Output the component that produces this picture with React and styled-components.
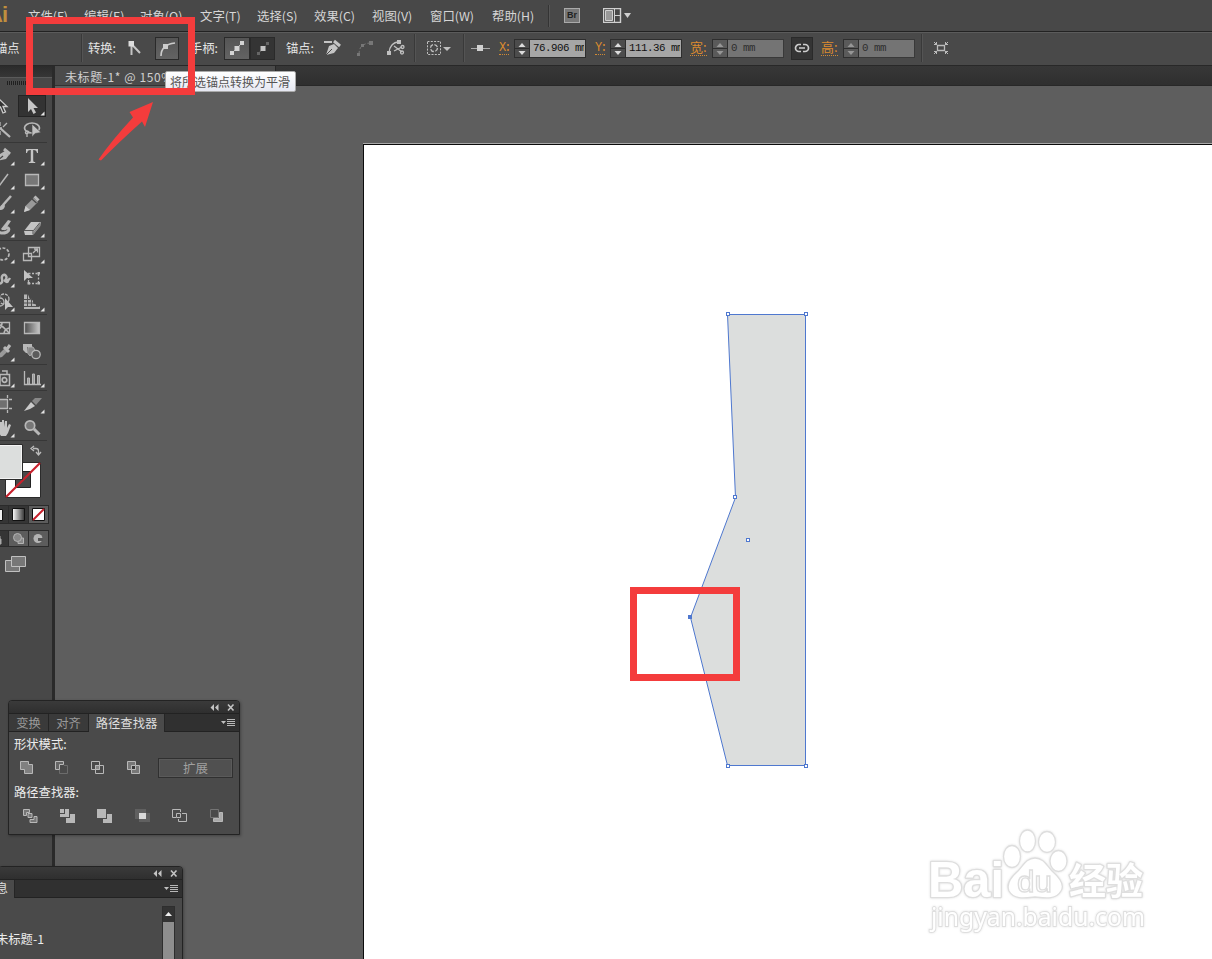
import React from "react";
import styled, { createGlobalStyle, css } from "styled-components";

const GlobalStyle = createGlobalStyle`
  * { box-sizing: border-box; }
  body {
    margin: 0;
    overflow: hidden;
    font-family: "Noto Sans CJK SC", sans-serif;
    font-size: 12px;
    color: #d6d6d6;
    background: #5e5e5e;
  }
  svg { display: block; flex: none; }
`;

const Window = styled.div`
  position: relative;
  display: flex;
  flex-direction: column;
  width: 1212px;
  height: 959px;
  overflow: hidden;
  background: #5e5e5e;
`;

/* menu bar */

const MenuBar = styled.nav`
  display: flex;
  align-items: center;
  flex: none;
  height: 32px;
  background: #484848;
  border-bottom: 1px solid #222;
`;

const Logo = styled.div`
  width: 28px;
  height: 30px;
  margin-left: -13px;
  margin-right: 13px;
  font: bold 22px/27px "Liberation Sans", sans-serif;
  color: #c08f3e;
  letter-spacing: -1px;
  white-space: nowrap;
`;

const MenuItem = styled.span`
  width: ${(p) => p.$w}px;
  flex: none;
  line-height: 18px;
  font-size: 12.4px;
  white-space: nowrap;
`;

const MenuDivider = styled.i`
  width: 2px;
  height: 22px;
  margin-right: 14px;
  background: #343434;
  border-right: 1px solid #565656;
`;

const BridgeButton = styled.div`
  width: 16px;
  height: 15px;
  margin-right: 23px;
  border: 1px solid #aaa;
  background: #777;
  color: #222;
  font: bold 9px/13px "Liberation Sans", sans-serif;
  text-align: center;
`;

/* control bar */

const ControlBar = styled.div`
  display: flex;
  align-items: center;
  flex: none;
  height: 34px;
  padding-bottom: 2px;
  background: #494949;
  border-top: 1px solid #5b5b5b;
  border-bottom: 1px solid #282828;
  overflow: hidden;
`;

const Slot = styled.div`
  display: flex;
  align-items: center;
  flex: none;
  width: ${(p) => p.$w}px;
  height: 30px;
  color: #e2e2e2;
  font-size: 12.3px;
  white-space: nowrap;
`;

const SelectionSlot = styled(Slot)`
  margin-left: -5px;
`;

const Divider = styled.i`
  flex: none;
  width: 2px;
  height: 28px;
  background: #393939;
  border-right: 1px solid #545454;
`;

const Toggle = styled.div`
  display: flex;
  align-items: center;
  justify-content: center;
  flex: none;
  width: ${(p) => p.$w || 24}px;
  height: 23px;
  border: 1px solid #2a2a2a;
  background: ${(p) => (p.$dark ? "#343434" : "linear-gradient(#555, #636363)")};
`;

const OrangeLabel = styled.span`
  display: inline-block;
  height: ${(p) => (p.$mono ? 14 : 15)}px;
  border-bottom: 1px dotted #d08a35;
  color: #db8b2f;
  font-family: ${(p) => (p.$mono ? '"Liberation Mono"' : '"Noto Sans CJK SC"')}, monospace;
  font-size: ${(p) => (p.$mono ? 12 : 13)}px;
  line-height: ${(p) => (p.$mono ? 14 : 12)}px;
  letter-spacing: ${(p) => (p.$mono ? -2 : 0)}px;
`;

const Steps = styled.div`
  display: flex;
  flex: none;
  width: 16px;
  height: 19px;
  border: 1px solid #2e2e2e;
  background: ${(p) => (p.$off ? "#5a5a5a" : "#4c4c4c")};
`;

const ValueBox = styled.div`
  flex: none;
  width: 56px;
  height: 19px;
  padding: 0 1px 0 3px;
  border: 1px solid #2e2e2e;
  border-left: 0;
  background: #a6a6a6;
  color: #111;
  font: 10.8px/16px "Liberation Mono", monospace;
  letter-spacing: -0.48px;
  ${(p) =>
    p.$off &&
    css`
      background: #747474;
      color: #2e2e2e;
      border-color: #393939;
    `}
`;

const ValueText = styled.span`
  display: block;
  overflow: hidden;
  white-space: nowrap;
`;

/* work area */

const Workspace = styled.div`
  display: flex;
  flex: 1;
  min-height: 0;
`;

const Tools = styled.aside`
  flex: none;
  width: 55px;
  background: #484848;
  border-right: 3px solid #2a2a2a;
  overflow: hidden;
`;

const ToolsHeader = styled.div`
  height: 12px;
  background: linear-gradient(#2b2b2b, #363636);
  border-bottom: 1px solid #5a5a5a;
`;

const Grip = styled.div`
  width: 20px;
  height: 4px;
  margin: 3px 0 9px 7px;
  background: repeating-linear-gradient(90deg, #1f1f1f 0 1px, #4a4a4a 1px 2px);
`;

const ToolGroup = styled.div`
  display: grid;
  grid-template-columns: 28px 28px;
  width: 57px;
  margin-left: -10px;
  border-bottom: 1px solid #373737;
  margin-bottom: 1px;
`;

const ToolCell = styled.div`
  height: 24px;
  ${(p) =>
    p.$active &&
    css`
      background: #333;
      box-shadow: inset 0 0 0 1px #242424;
      height: 22px;
      margin-top: 1px;
      & > svg { margin-top: -1px; }
    `}
`;

const ModeRow = styled.div`
  display: grid;
  grid-template-columns: 19px 20px 20px;
  width: 59px;
  height: ${(p) => p.$h}px;
  margin: ${(p) => p.$top}px 0 0 -10px;
  border: solid #2b2b2b;
  border-width: 1px 1px 1px 0;
`;

const ModeCell = styled.div`
  display: flex;
  align-items: center;
  justify-content: center;
  border-right: 1px solid #2b2b2b;
  background: ${(p) => (p.$dark ? "#353535" : "#5c5c5c")};
`;

const Document = styled.main`
  display: flex;
  flex-direction: column;
  flex: 1;
  min-width: 0;
`;

const TabStrip = styled.div`
  height: 20px;
  flex: none;
  background: linear-gradient(#373737, #2f2f2f);
  border-bottom: 1px solid #282828;
`;

const DocTab = styled.div`
  width: 221px;
  height: 20px;
  padding-left: 10px;
  background: #4b4b4b;
  border-right: 1px solid #272727;
  border-bottom: 1px solid #333;
  color: #d0d0d0;
  font-size: 12px;
  line-height: 21px;
  letter-spacing: 0.6px;
  white-space: nowrap;
`;

const Canvas = styled.div`
  flex: 1;
  padding: 58px 0 0 308px;
  background: #5e5e5e;
`;

const Artboard = styled.div`
  width: 849px;
  height: 815px;
  border: solid #0c0c0c;
  border-width: 1px 0 0 1px;
  background: #fff;
  box-shadow: 0 -1px 0 #a8a8a8;
`;

/* floating panels */

const Panel = styled.section`
  position: absolute;
  left: ${(p) => p.$x}px;
  top: ${(p) => p.$y}px;
  width: ${(p) => p.$w}px;
  height: ${(p) => p.$h}px;
  background: #4a4a4a;
  border: 1px solid #232323;
  border-radius: 4px 4px 0 0;
  box-shadow: 1px 1px 3px rgba(0, 0, 0, 0.3);
  overflow: hidden;
`;

const PanelTop = styled.header`
  display: flex;
  align-items: center;
  justify-content: flex-end;
  height: 13px;
  padding-right: 4px;
  background: linear-gradient(#3a3a3a, #2f2f2f);
  border-bottom: 1px solid #222;
`;

const PanelTabs = styled.div`
  display: flex;
  height: 18px;
  background: #303030;
  border-bottom: 1px solid #222;
`;

const PanelTab = styled.div`
  width: ${(p) => p.$w}px;
  height: ${(p) => (p.$on ? 18 : 17)}px;
  flex: none;
  border-right: 1px solid #252525;
  background: ${(p) => (p.$on ? "#4a4a4a" : "#3a3a3a")};
  color: ${(p) => (p.$on ? "#ddd" : "#999")};
  font-size: 12.3px;
  line-height: 19px;
  text-align: center;
  white-space: nowrap;
`;

const InfoTab = styled(PanelTab)`
  line-height: 17px;
  padding-right: 6px;
  text-align: right;
  direction: rtl;
  overflow: hidden;
`;

const PanelMenu = styled.div`
  margin: 4px 3px 0 auto;
`;

const Heading = styled.div`
  height: 24px;
  padding-left: 5px;
  color: #ececec;
  line-height: 25px;
  font-size: 12.3px;
`;

const IconRow = styled.div`
  display: flex;
  align-items: center;
  height: 24px;
  padding-left: ${(p) => p.$pad}px;
  gap: ${(p) => p.$gap}px;
  & > svg { margin-top: -1px; }
`;

const ExpandButton = styled.div`
  width: 75px;
  height: 20px;
  margin-left: -5px;
  border: 1px solid #303030;
  background: #505050;
  box-shadow: inset 0 0 0 1px #5a5a5a;
  color: #a0a0a0;
  font-size: 12.5px;
  line-height: 18px;
  text-align: center;
`;

const InfoBody = styled.div`
  display: flex;
  justify-content: space-between;
  height: 61px;
  padding: 8px 7px 0 0;
  color: #ececec;
`;

const InfoText = styled.div`
  margin: 24px 0 0 -3px;
  line-height: 18px;
  font-size: 12.3px;
  white-space: nowrap;
`;

const ScrollBar = styled.div`
  width: 13px;
  height: 60px;
  background: #8e8e8e;
  border: 1px solid #2e2e2e;
`;

const ScrollUp = styled.div`
  height: 15px;
  background: #333;
`;

/* annotations lying over the window */

const Tooltip = styled.div`
  position: absolute;
  left: 165px;
  top: 71px;
  width: 131px;
  height: 21px;
  padding-left: 4px;
  border: 1px solid #aaa;
  border-radius: 2px;
  background: linear-gradient(#fff, #e6e8f2);
  color: #555;
  font-size: 12px;
  line-height: 19px;
  white-space: nowrap;
`;

const RedFrame = styled.div`
  position: absolute;
  left: ${(p) => p.$x}px;
  top: ${(p) => p.$y}px;
  width: ${(p) => p.$w}px;
  height: ${(p) => p.$h}px;
  border: 7px solid #f43c3c;
`;

const Arrow = styled.svg`
  position: absolute;
  left: 90px;
  top: 94px;
`;

const Watermark = styled.svg`
  position: absolute;
  left: 915px;
  top: 820px;
  filter: drop-shadow(0 0 1px rgba(0, 0, 0, 0.12));
`;

const tone = "#b8b8b8";

const Corner = ({ x }) => <path d={`M${x} 17.500v4h-4z`} fill="#e4e4e4" />;

function Tool({ right, active, corner = true, children }) {
  return (
    <ToolCell $active={active}>
      <svg width="28" height="24" viewBox={right ? "18 0 28 24" : "-10 0 28 24"} fill="none" stroke={tone} strokeWidth="1.3">
        {children}
        {corner && <g stroke="none"><Corner x={right ? 44.5 : 14.5} /></g>}
      </svg>
    </ToolCell>
  );
}

function ToolGrid() {
  return (
    <>
      <ToolGroup>
        <Tool corner={false}>
          <path d="M-3 3v13l3.500-3 2.500 6 2.500-1-2.500-5.500H7z" fill="#333" stroke="#ccc" />
        </Tool>
        <Tool right active>
          <path d="M28 4v14l3-3 2.500 5 2.500-1.500-2.500-4.500H38z" fill="#c6c6c6" stroke="none" />
        </Tool>
        <Tool corner={false}>
          <path d="M0 10l10 9" strokeWidth="2.200" />
          <path d="M0 4v4M3 9l4-4M-2 10h4M0 13v4" />
        </Tool>
        <Tool right corner={false}>
          <ellipse cx="32" cy="10" rx="7.500" ry="5" strokeWidth="1.700" />
          <path d="M27 13c-3 1-1 4 1 2s-1-2-1-2zM27 16v3" strokeWidth="1.300" />
          <path d="M32 6v13l3-3.500 6-1z" fill="#c0c0c0" stroke="#484848" strokeWidth=".6" />
        </Tool>
      </ToolGroup>
      <ToolGroup>
        <Tool>
          <path d="M-3 17l3-7 5-3 4 4-3 4z" fill={tone} stroke="none" />
          <path d="M4 5l6 5" strokeWidth="3" />
          <path d="M-3 17l6-5" stroke="#444" />
        </Tool>
        <Tool right>
          <path d="M26 5h12v4h-1c-.5-2-1-3-3.800-3v10c0 1.700.5 2 2 2v1h-6.400v-1c1.500 0 2-.3 2-2V6C28 6 27.500 7 27 9h-1z" fill="#c4c4c4" stroke="none" />
        </Tool>
        <Tool><path d="M-1 18L8 6" strokeWidth="1.500" /></Tool>
        <Tool right><path d="M25.500 6.500h13v11h-13z" fill="#777" /></Tool>
        <Tool>
          <path d="M11 4L3 13" strokeWidth="2.500" />
          <path d="M4 12c-2-1-4 4-7 5 4 2 7 1 8-3z" fill={tone} stroke="none" />
        </Tool>
        <Tool right>
          <path d="M24 20l1.500-6 8-8 4.500 4-8 8z" fill="#999" stroke="none" />
          <path d="M24 20l1.500-6 4.500 4z" fill="#ccc" stroke="none" />
          <path d="M32 7l4.500 4" stroke="#484848" />
          <path d="M34.500 4.500l4 4" strokeWidth="3" />
        </Tool>
        <Tool>
          <path d="M-1 9c-6 5 1 10 8 7 3-2 2-5-1-4s-3 2-3 2" strokeWidth="3" />
          <path d="M1 13L8 4l3 1-6 9z" fill={tone} stroke="none" />
        </Tool>
        <Tool right>
          <path d="M24 15l7-9h10l-1 4-7 9h-8z" fill="#c4c4c4" stroke="none" />
          <path d="M34 15l6.500-8.500V10l-7 8.500z" fill="#888" stroke="none" />
          <path d="M24 14.500h9.500L40 6.500M33 14.500v4" stroke="#555" strokeWidth="1" />
        </Tool>
      </ToolGroup>
      <ToolGroup>
        <Tool><circle cx="3" cy="12" r="6" strokeDasharray="3 1.500" strokeWidth="1.700" /></Tool>
        <Tool right>
          <path d="M28.500 5.500h11v9h-11zM23.500 11.500h8v7h-8z" />
          <path d="M33 11l4-4M34 7h3.500v3.500" />
        </Tool>
        <Tool>
          <path d="M-3 17c4 2 6-1 5-4s2-6 4-3-2 4-1 5 4-1 5-3" strokeWidth="2.400" />
          <circle cx="7" cy="15" r="1.500" />
        </Tool>
        <Tool right corner={false}>
          <path d="M28.500 7.500h10v10h-10z" strokeDasharray="2 1.500" />
          <path d="M24 4v11l3-3h6z" fill="#c4c4c4" stroke="none" />
          <path d="M37.500 6h2.500v2.500h-2.500zM37.500 16h2.500v2.500h-2.500zM27.500 16h2.500v2.500h-2.500z" fill={tone} stroke="none" />
        </Tool>
        <Tool>
          <circle cx="4" cy="9" r="5" strokeDasharray="3 1" /><circle cx="0" cy="12" r="4" />
          <path d="M5 8v12l3-3h5z" fill="#c4c4c4" stroke="none" />
        </Tool>
        <Tool right>
          <path d="M24 4.500h4l2 5 3 1v3l3 1v2h4v2.500H24z" fill="#b4b4b4" stroke="none" />
          <path d="M27.500 4v12M31.500 8v8M24 9.500h6M24 13h10M24 16.500h15" stroke="#505050" strokeWidth="1" />
        </Tool>
      </ToolGroup>
      <ToolGroup>
        <Tool corner={false}>
          <path d="M-4 6.500H9.500v11H-4z" />
          <path d="M-4 15C2 12 2 9 2 6M4 18c0-5 3-5 5-6M-3 8c6 1 8 5 12 9" strokeWidth="1.600" />
        </Tool>
        <Tool right corner={false}>
          <defs>
            <linearGradient id="toolGradient"><stop stopColor="#4c4c4c" /><stop offset="1" stopColor="#c8c8c8" /></linearGradient>
          </defs>
          <path d="M24.500 6.500h15v11h-15z" fill="url(#toolGradient)" />
        </Tool>
        <Tool>
          <path d="M-3 18l2-4 6-6 3 3-6 6z" fill="#999" stroke="none" />
          <path d="M4 7l5 5M7 9l3-4" strokeWidth="3" />
        </Tool>
        <Tool right corner={false}>
          <path d="M23 4h9v3h-5v6h-1l-3-3z" fill={tone} stroke="none" />
          <path d="M28 7h5l2 3-5 6-2.500-3z" fill="#888" stroke={tone} strokeWidth=".8" />
          <circle cx="36" cy="14.500" r="4.200" fill="#5b5b5b" />
        </Tool>
      </ToolGroup>
      <ToolGroup>
        <Tool>
          <path d="M0 8.500h9.500v11H0zM2 5h5v3" strokeWidth="1.500" /><circle cx="4.500" cy="14" r="2.300" strokeWidth="1.700" />
          <path d="M-4 5h4M-4 9h2" strokeDasharray="1 1" />
        </Tool>
        <Tool right>
          <path d="M24.500 5v13.500H41" />
          <path d="M27.500 12h2v6h-2zM32.500 8h2v10h-2zM37.500 9.500h2V18h-2z" fill="#999" strokeWidth="1" />
        </Tool>
      </ToolGroup>
      <ToolGroup>
        <Tool corner={false}>
          <path d="M-4 7.500H7.500v9H-4z" fill="#707070" />
          <path d="M7.500 3v3M7.500 18v3M9 7.500h3M9 16.500h3" />
        </Tool>
        <Tool right>
          <path d="M24 19l7-9 4 4-5 3z" fill="#cacaca" stroke="none" />
          <path d="M32 9l3-3h7l-6 7z" fill="#888" stroke="none" />
        </Tool>
        <Tool>
          <path d="M-1 17l-4-6 2-1 3 3V6h2v5V4h2v7l1-6h2v7l2-4 2 1-3 8-2 3H1z" fill="#c6c6c6" stroke="none" />
        </Tool>
        <Tool right corner={false}>
          <circle cx="30" cy="9.500" r="4.700" fill="#777" strokeWidth="1.700" />
          <path d="M34 13l5.500 5.500" strokeWidth="3" />
        </Tool>
      </ToolGroup>
    </>
  );
}

function Swatches() {
  return (
    <svg width="52" height="61" viewBox="0 442 52 61">
      <path d="M33 448.500h3q2.500 0 2.500 2.500v3M34 446l-3 2.500 3 2.500M36 452l2.500 3 2.500-3" fill="none" stroke="#bbb" strokeWidth="1.300" />
      <path d="M5.500 462.500h35v35h-35z" fill="#fff" stroke="#2b2b2b" />
      <path d="M15.500 471.500h15v16h-15z" fill="#484848" stroke="#222" />
      <path d="M6 497L40 463" stroke="#c8202c" strokeWidth="2.200" />
      <path d="M-2 444.500h24.500v35H-2z" fill="#dcdedd" stroke="#2b2b2b" />
      <path d="M-2 445.500h23.500v33H-2" fill="none" stroke="#f4f4f4" />
    </svg>
  );
}

function Stepper({ off }) {
  return (
    <Steps $off={off}>
      <svg width="14" height="17">
        <path d="M3.500 7l3.500-4 3.500 4zM3.500 11l3.500 4 3.500-4z" fill={off ? "#969696" : "#dcdcdc"} />
        <path d="M0 8.500h14" stroke="#2e2e2e" />
      </svg>
    </Steps>
  );
}

const Value = ({ off, children }) => (
  <ValueBox $off={off}><ValueText>{children}</ValueText></ValueBox>
);

function PanelControls() {
  return (
    <svg width="25" height="9" fill="#c4c4c4">
      <path d="M4 1v7L0.500 4.500zM8.500 1v7L5 4.500z" />
      <path d="M18 1.500l5.500 6M23.500 1.500l-5.500 6" stroke="#c4c4c4" strokeWidth="1.600" />
    </svg>
  );
}

function FlyoutIcon() {
  return (
    <svg width="15" height="10">
      <path d="M0 3h5L2.500 6z" fill="#c0c0c0" />
      <path d="M6 1.500h8M6 3.500h8M6 5.500h8M6 7.500h8" stroke="#b8b8b8" />
    </svg>
  );
}

const Glyph = ({ children }) => (
  <svg width="15" height="15" viewBox="0 0 15 15" fill="none" stroke="#b8b8b8">{children}</svg>
);

function PathfinderPanel() {
  return (
    <Panel $x={8} $y={700} $w={232} $h={135}>
      <PanelTop><PanelControls /></PanelTop>
      <PanelTabs>
        <PanelTab $w={40}>变换</PanelTab>
        <PanelTab $w={40}>对齐</PanelTab>
        <PanelTab $w={76} $on>路径查找器</PanelTab>
        <PanelMenu><FlyoutIcon /></PanelMenu>
      </PanelTabs>
      <Heading>形状模式:</Heading>
      <IconRow $pad={10} $gap={21}>
        <Glyph><path d="M1.500 1.500h8v3h4v9h-8v-4h-4z" fill="#808080" /></Glyph>
        <Glyph><path d="M.500 1.500h8v3h-4v5h-4z" fill="#666" /><path d="M9 5.500h3.500v8h-8V10" stroke="#6c6c6c" /></Glyph>
        <Glyph><path d="M.500 1.500h8v8h-8zM4.500 5.500h8v8h-8z" /><path d="M4.500 5.500h4v4h-4z" fill="#888" /></Glyph>
        <Glyph><path d="M.500 1.500h8v8h-8zM4.500 5.500h8v8h-8z" fill="#777" /><path d="M4.500 5.500h4v4h-4z" fill="#383838" /></Glyph>
        <ExpandButton>扩展</ExpandButton>
      </IconRow>
      <Heading>路径查找器:</Heading>
      <IconRow $pad={14} $gap={22.2}>
        <Glyph><path d="M.500 1.500h6v3h-3v3h-3zM5 5.500h4v4H5zM11 8.500h3v6H7v-3h4z" fill="#777" /></Glyph>
        <Glyph><path d="M0 1h4v4H0zM5 1h4v8H0V6h5zM10 6h5v9H6v-5h4z" fill={tone} stroke="none" /></Glyph>
        <Glyph><path d="M0 1h9v9H0zM10 6h5v9H6v-4h4z" fill={tone} stroke="none" /></Glyph>
        <Glyph><path d="M0 1h11v10H0zM4 5h11v9H4z" fill="#606060" stroke="none" /><path d="M4 5h7v6H4z" fill="#d8d8d8" stroke="none" /></Glyph>
        <Glyph><path d="M4 9.500H.500v-8h8V4M4.500 5.500h4v4h-4zM10 5.500h4.500v8h-8V11" /></Glyph>
        <Glyph><path d="M1.500 1.500h8v8h-8z" stroke="#747474" /><path d="M10.500 4.500h3v9h-9v-3h6z" fill="#aaa" /></Glyph>
      </IconRow>
    </Panel>
  );
}

function InfoPanel() {
  return (
    <Panel $x={-2} $y={866} $w={185} $h={95}>
      <PanelTop><PanelControls /></PanelTop>
      <PanelTabs>
        <InfoTab $w={16} $on>息</InfoTab>
        <PanelMenu><FlyoutIcon /></PanelMenu>
      </PanelTabs>
      <InfoBody>
        <InfoText>未标题-1</InfoText>
        <ScrollBar>
          <ScrollUp><svg width="11" height="15"><path d="M2 9l3.500-4L9 9z" fill="#eee" /></svg></ScrollUp>
        </ScrollBar>
      </InfoBody>
    </Panel>
  );
}

const menus = [
  ["文件(F)", 56], ["编辑(E)", 56], ["对象(O)", 60], ["文字(T)", 57], ["选择(S)", 57],
  ["效果(C)", 58], ["视图(V)", 58], ["窗口(W)", 62], ["帮助(H)", 56],
];

const anchors = [[728, 314], [806, 314], [806, 766], [728, 766], [735, 497], [748, 540]];

function Drawing() {
  return (
    <svg width="848" height="814" viewBox="364 145 848 814">
      <path d="M727.500 314.500H805.500V765.500H727.500L690.500 617.500L735.500 497.500Z" fill="#dcdedd" stroke="#4f78cf" />
      {anchors.map(([x, y]) => (
        <rect key={`${x}-${y}`} x={x - 1.5} y={y - 1.5} width="3" height="3" fill="#fff" stroke="#4f78cf" />
      ))}
      <rect x="688" y="615" width="4" height="4" fill="#4f78cf" />
    </svg>
  );
}

export default function App() {
  return (
    <Window>
      <GlobalStyle />
      <MenuBar>
        <Logo>Ai</Logo>
        {menus.map(([label, w]) => <MenuItem key={label} $w={w}>{label}</MenuItem>)}
        <MenuDivider />
        <BridgeButton>Br</BridgeButton>
        <svg width="28" height="15" fill="none" stroke="#d0d0d0">
          <path d="M.500.500h17v14H.500z" strokeWidth="1.400" />
          <path d="M2.500 2.500h7v10h-7z" fill="#999" />
          <path d="M11.500 1v13M11.500 7.500h6" />
          <path d="M21 5h7l-3.500 5z" fill="#d0d0d0" stroke="none" />
        </svg>
      </MenuBar>

      <ControlBar>
        <SelectionSlot $w={86}>锚点</SelectionSlot>
        <Divider />
        <Slot $w={5} />
        <Slot $w={39}>转换:</Slot>
        <Slot $w={28}>
          <svg width="16" height="16" stroke="#c4c4c4" fill="none" strokeWidth="2">
            <path d="M4.500 15V4l8.500 9" /><path d="M1.500 1h5.500v5.500H1.500z" fill="#ddd" stroke="none" />
          </svg>
        </Slot>
        <Slot $w={35}>
          <Toggle>
            <svg width="18" height="18" stroke="#ccc" fill="none" strokeWidth="1.600">
              <path d="M3 17c0-8 5-12 14-13" /><path d="M5 5h5v5H5z" fill="#ccc" stroke="none" />
            </svg>
          </Toggle>
        </Slot>
        <Slot $w={34}>手柄:</Slot>
        <Slot $w={62}>
          <Toggle $w={26}>
            <svg width="18" height="18" stroke="#bbb" fill="#d4d4d4"><path d="M4 14L14 4" /><path d="M2 12h4v4H2zM6.500 7h5v5h-5zM12 2h4v4h-4z" stroke="none" /></svg>
          </Toggle>
          <Toggle $w={25} $dark>
            <svg width="18" height="18" stroke="#777" fill="#c4c4c4"><path d="M4 15L14 4" strokeDasharray="2 1" /><path d="M6.500 7h5v5h-5z" stroke="none" /><path d="M3 13h3v3H3zM12 3h3v3h-3z" fill="#666" stroke="none" /></svg>
          </Toggle>
        </Slot>
        <Slot $w={38}>锚点:</Slot>
        <Slot $w={33}>
          <svg width="18" height="18" fill="#c4c4c4">
            <path d="M0 2h8v2H0z" />
            <path d="M2 16l3-9 5-2 4 4-4 5z" />
            <path d="M10 2l6 5" stroke="#c4c4c4" strokeWidth="3" />
            <path d="M2 16l6-6" stroke="#484848" />
          </svg>
        </Slot>
        <Slot $w={30}>
          <svg width="17" height="17" fill="#777" stroke="#777"><path d="M2 14C2 7 6 3 14 3" fill="none" strokeDasharray="3 2" /><path d="M12 1h4v4h-4zM0 13h3v3H0zM4 4h3v3H4z" stroke="none" /></svg>
        </Slot>
        <Slot $w={27}>
          <svg width="19" height="18" fill="none" stroke="#c0c0c0" strokeWidth="1.300">
            <path d="M2 14C2 8 6 3 12 3M7 7l8 6M7 12l8-4" /><path d="M10 1h4v4h-4zM0 12h4v4H0z" fill="#c0c0c0" stroke="none" /><circle cx="15.500" cy="8" r="1.500" /><circle cx="15" cy="13.500" r="1.500" />
          </svg>
        </Slot>
        <Divider />
        <Slot $w={47}>
          <svg width="36" height="16" viewBox="-10 0 36 16" fill="none" stroke="#c0c0c0">
            <path d="M1.500 1.500h13v13H1.500z" strokeDasharray="2 1.300" /><circle cx="8" cy="8" r="3.500" strokeWidth="1.300" strokeDasharray="4 1.500" />
            <path d="M17 7h8l-4 4z" fill="#c0c0c0" stroke="none" />
          </svg>
        </Slot>
        <Divider />
        <Slot $w={34}>
          <svg width="25" height="12" viewBox="-6 0 25 12"><path d="M0 6.500h19" stroke="#aaa" /><path d="M6 3h6v6H6z" fill="#d0d0d0" /></svg>
        </Slot>
        <Slot $w={15}><OrangeLabel $mono>X:</OrangeLabel></Slot>
        <Slot $w={81}><Stepper /><Value>76.906 mm</Value></Slot>
        <Slot $w={15}><OrangeLabel $mono>Y:</OrangeLabel></Slot>
        <Slot $w={80}><Stepper /><Value>111.36 mm</Value></Slot>
        <Slot $w={22}><OrangeLabel>宽:</OrangeLabel></Slot>
        <Slot $w={79}><Stepper off /><Value off>0 mm</Value></Slot>
        <Slot $w={30}>
          <Toggle $w={22} $dark>
            <svg width="16" height="10" fill="none" stroke="#ccc" strokeWidth="1.700"><path d="M7 1.500H5a3.500 3.500 0 0 0 0 7h2M9 1.500h2a3.500 3.500 0 0 1 0 7H9M5 5h6" /></svg>
          </Toggle>
        </Slot>
        <Slot $w={22}><OrangeLabel>高:</OrangeLabel></Slot>
        <Slot $w={78}><Stepper off /><Value off>0 mm</Value></Slot>
        <Divider />
        <Slot $w={40}>
          <svg width="28" height="16" viewBox="-10 0 28 16" fill="none" stroke="#bbb">
            <path d="M4.500 5.500h7v5h-7z" strokeWidth="1.300" />
            <path d="M1 2l3 3M15 2l-3 3M1 14l3-3M15 14l-3-3M1 4.500h2.500V2M15 4.500h-2.500V2M1 11.500h2.500V14M15 11.500h-2.500V14" />
          </svg>
        </Slot>
      </ControlBar>

      <Workspace>
        <Tools>
          <ToolsHeader />
          <Grip />
          <ToolGrid />
          <Swatches />
          <ModeRow $top={2} $h={19}>
            <ModeCell $dark><svg width="12" height="12" viewBox="-3 0 12 12"><path d="M-3 .500H6.500v11H-3z" fill="#eee" stroke="#111" /></svg></ModeCell>
            <ModeCell $dark>
              <svg width="13" height="13">
                <defs><linearGradient id="modeGradient"><stop stopColor="#fff" /><stop offset="1" stopColor="#333" /></linearGradient></defs>
                <path d="M.500.500h12v12H.500z" fill="url(#modeGradient)" stroke="#111" />
              </svg>
            </ModeCell>
            <ModeCell><svg width="13" height="13"><path d="M.500.500h12v12H.500z" fill="#fff" stroke="#111" /><path d="M1 12L12 1" stroke="#c8202c" strokeWidth="2" /></svg></ModeCell>
          </ModeRow>
          <ModeRow $top={6} $h={17}>
            <ModeCell $dark><svg width="12" height="12" viewBox="-4 0 12 12"><path d="M0 6h4v5H0zM1 6V3h2v3" fill="#aaa" stroke="#aaa" /></svg></ModeCell>
            <ModeCell><svg width="13" height="13" fill="#888" stroke="#b4b4b4"><path d="M6 6h5.500v5.500H6z" /><circle cx="5.500" cy="5.500" r="4" /></svg></ModeCell>
            <ModeCell><svg width="13" height="13"><circle cx="6" cy="6.500" r="4.500" fill="#b4b4b4" /><path d="M6 6h5v3H6z" fill="#555" /></svg></ModeCell>
          </ModeRow>
          <svg width="30" height="30" viewBox="0 547 30 30" stroke="#c0c0c0" fill="#777">
            <path d="M5.500 560.500h14v11h-14z" />
            <path d="M11.500 556.500h14v10h-14z" />
          </svg>
        </Tools>

        <Document>
          <TabStrip><DocTab>未标题-1* @ 150%</DocTab></TabStrip>
          <Canvas>
            <Artboard><Drawing /></Artboard>
          </Canvas>
        </Document>
      </Workspace>

      <Watermark width="240" height="120" viewBox="915 820 240 120" fill="#fff" stroke="#dedede" strokeWidth="1.300">
        <g fontWeight="bold" paintOrder="stroke" strokeWidth="2.600" strokeLinejoin="round">
          <text x="928" y="897" fontFamily="Liberation Sans" fontSize="50" textLength="76" lengthAdjust="spacingAndGlyphs">Bai</text>
          <text x="1069" y="895" fontFamily="Noto Sans CJK SC" fontSize="37">经验</text>
        </g>
        <ellipse cx="1012" cy="856.500" rx="8.500" ry="11" />
        <ellipse cx="1027.500" cy="841" rx="8" ry="11" />
        <ellipse cx="1047" cy="842" rx="8.500" ry="10.500" />
        <ellipse cx="1058.500" cy="861" rx="8.500" ry="10.500" />
        <path d="M1035 858c9 0 12 8 17 13 8 7 13 14 9 20-5 9-16 7-26 6-10 1-21 3-26-6-3-7 1-13 9-20 5-5 8-13 17-13z" />
        <text x="1017" y="892" fontFamily="Liberation Sans" fontSize="29" textLength="35" lengthAdjust="spacingAndGlyphs">du</text>
        <text x="931" y="926" fontFamily="Noto Sans" fontSize="25" textLength="214" lengthAdjust="spacingAndGlyphs" paintOrder="stroke" strokeWidth="1.800">jingyan.baidu.com</text>
      </Watermark>

      <PathfinderPanel />
      <InfoPanel />
      <Tooltip>将所选锚点转换为平滑</Tooltip>
      <RedFrame $x={26} $y={17} $w={169} $h={78} />
      <RedFrame $x={630} $y={587} $w={110} $h={94} />
      <Arrow width="66" height="70" viewBox="90 94 66 70">
        <path d="M153 102L145 127L142 121.500Q118 143 101 160.500L98.500 159.500Q112 140 133 117.500L129.500 112Z" fill="#f43c3c" />
      </Arrow>
    </Window>
  );
}
